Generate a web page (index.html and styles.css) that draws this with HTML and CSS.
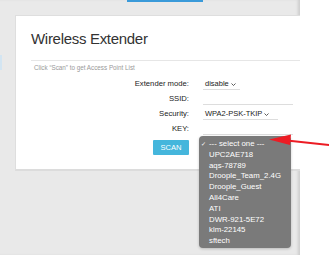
FILE: index.html
```html
<!DOCTYPE html>
<html lang="en">

<head>
    <meta charset="UTF-8">
    <meta name="viewport" content="width=device-width, initial-scale=1.0">
    <title>Wireless Extender</title>
    <link rel="stylesheet" href="styles.css">
</head>

<body>

    <div class="page">
        <div class="topbar">
            <div class="tab-line"></div>
        </div>

        <div class="main">
            <div class="sidebar">
                <div class="side-mark"></div>
            </div>

            <div class="card">
                <h2 class="title">Wireless Extender</h2>
                <div class="hint">Click “Scan” to get Access Point List</div>

                <div class="form-row">
                    <label>Extender mode:</label>
                    <div class="field select short">disable
                        <svg class="chev" width="5" height="3" viewBox="0 0 5 3"><polyline points="0.5,0.5 2.5,2.5 4.5,0.5" fill="none" stroke="#333" stroke-width="0.8"/></svg>
                    </div>
                </div>
                <div class="form-row">
                    <label>SSID:</label>
                    <div class="field wide"></div>
                </div>
                <div class="form-row">
                    <label>Security:</label>
                    <div class="field select medium">WPA2-PSK-TKIP
                        <svg class="chev" width="5" height="3" viewBox="0 0 5 3"><polyline points="0.5,0.5 2.5,2.5 4.5,0.5" fill="none" stroke="#333" stroke-width="0.8"/></svg>
                    </div>
                </div>
                <div class="form-row">
                    <label>KEY:</label>
                    <div class="field wide"></div>
                </div>
                <div class="button-row">
                    <button type="button" class="button">SCAN</button>
                </div>
            </div>
        </div>

        <!-- open select list over the form -->
        <ul class="dropdown">
            <li class="checked"><span class="check">✓</span>--- select one ---</li>
            <li>UPC2AE718</li>
            <li>aqs-78789</li>
            <li>Droople_Team_2.4G</li>
            <li>Droople_Guest</li>
            <li>All4Care</li>
            <li>ATI</li>
            <li>DWR-921-5E72</li>
            <li>klm-22145</li>
            <li>sftech</li>
        </ul>

        <svg class="arrow" width="62" height="16" viewBox="0 0 62 16">
            <line x1="19" y1="8.5" x2="62" y2="13" stroke="#ec1c24" stroke-width="2"/>
            <polygon points="1,7.5 23,2.5 22,13" fill="#ec1c24"/>
        </svg>
    </div>

</body>

</html>
```

FILE: styles.css
```css
body {
    font-family: "Liberation Sans", Arial, sans-serif;
    margin: 0;
    padding: 0;
    background-color: #fff;
    color: #222;
}

.page {
    position: relative;
    width: 300px;
    height: 255px;
    background-color: #e9e9e9;
    box-shadow: inset -3px 0 3px -1px rgba(0, 0, 0, 0.12);
}

.topbar {
    height: 15px;
}

.tab-line {
    margin-left: 127px;
    width: 76px;
    height: 2px;
    background-color: #3a9ad9;
}

.main {
    display: flex;
}

.sidebar {
    width: 15px;
}

.side-mark {
    margin-top: 40px;
    width: 2px;
    height: 15px;
    background-color: #d3e5f2;
}

.card {
    flex: 1;
    box-sizing: border-box;
    height: 156px;
    background-color: #fff;
    border: 1px solid #dedede;
    border-right: none;
    border-bottom: 2px solid #dcdcdc;
    padding: 12px 0 0 15px;
}

.title {
    margin: 0;
    font-size: 15px;
    font-weight: normal;
    letter-spacing: -0.3px;
    line-height: 22px;
    color: #333;
    padding-bottom: 10px;
    border-bottom: 1px solid #e6e6e6;
}

.hint {
    margin: 2px 0 4px 3px;
    font-size: 6.3px;
    line-height: 9px;
    color: #999;
}

.form-row {
    display: flex;
    align-items: flex-start;
    gap: 14px;
    height: 15px;
}

label {
    width: 158px;
    text-align: right;
    font-size: 7.7px;
    line-height: 15px;
    color: #222;
}

.field {
    box-sizing: border-box;
    height: 14px;
    padding: 2px 0 0 2px;
    font-size: 7.5px;
    line-height: 11px;
    color: #222;
    border-bottom: 1px solid #dddddd;
}

.select {
    display: flex;
    align-items: center;
    gap: 2px;
    height: 14px;
}

.chev {
    margin-top: 1px;
}

.short {
    width: 37px;
}

.medium {
    width: 75px;
}

.wide {
    width: 90px;
}

.button-row {
    display: flex;
    justify-content: flex-end;
    width: 158px;
    margin-top: 4px;
}

.button {
    width: 36px;
    height: 15px;
    padding: 0;
    font-family: inherit;
    font-size: 7.6px;
    color: #fff;
    background-color: #45b6dc;
    border: none;
    border-radius: 1px;
}

.dropdown {
    position: absolute;
    left: 199px;
    top: 136px;
    width: 92px;
    height: 112px;
    box-sizing: border-box;
    margin: 0;
    padding: 3px 0 0 10px;
    list-style: none;
    background-color: #7a7a7a;
    border-radius: 4px;
    box-shadow: 0 1px 3px rgba(0, 0, 0, 0.2);
    font-size: 7.8px;
    line-height: 10.8px;
    color: #fff;
}

.dropdown li {
    position: relative;
    white-space: nowrap;
}

.check {
    position: absolute;
    left: -8px;
    font-family: "DejaVu Sans", sans-serif;
    font-size: 6px;
}

.arrow {
    position: absolute;
    left: 268px;
    top: 132px;
}
```
